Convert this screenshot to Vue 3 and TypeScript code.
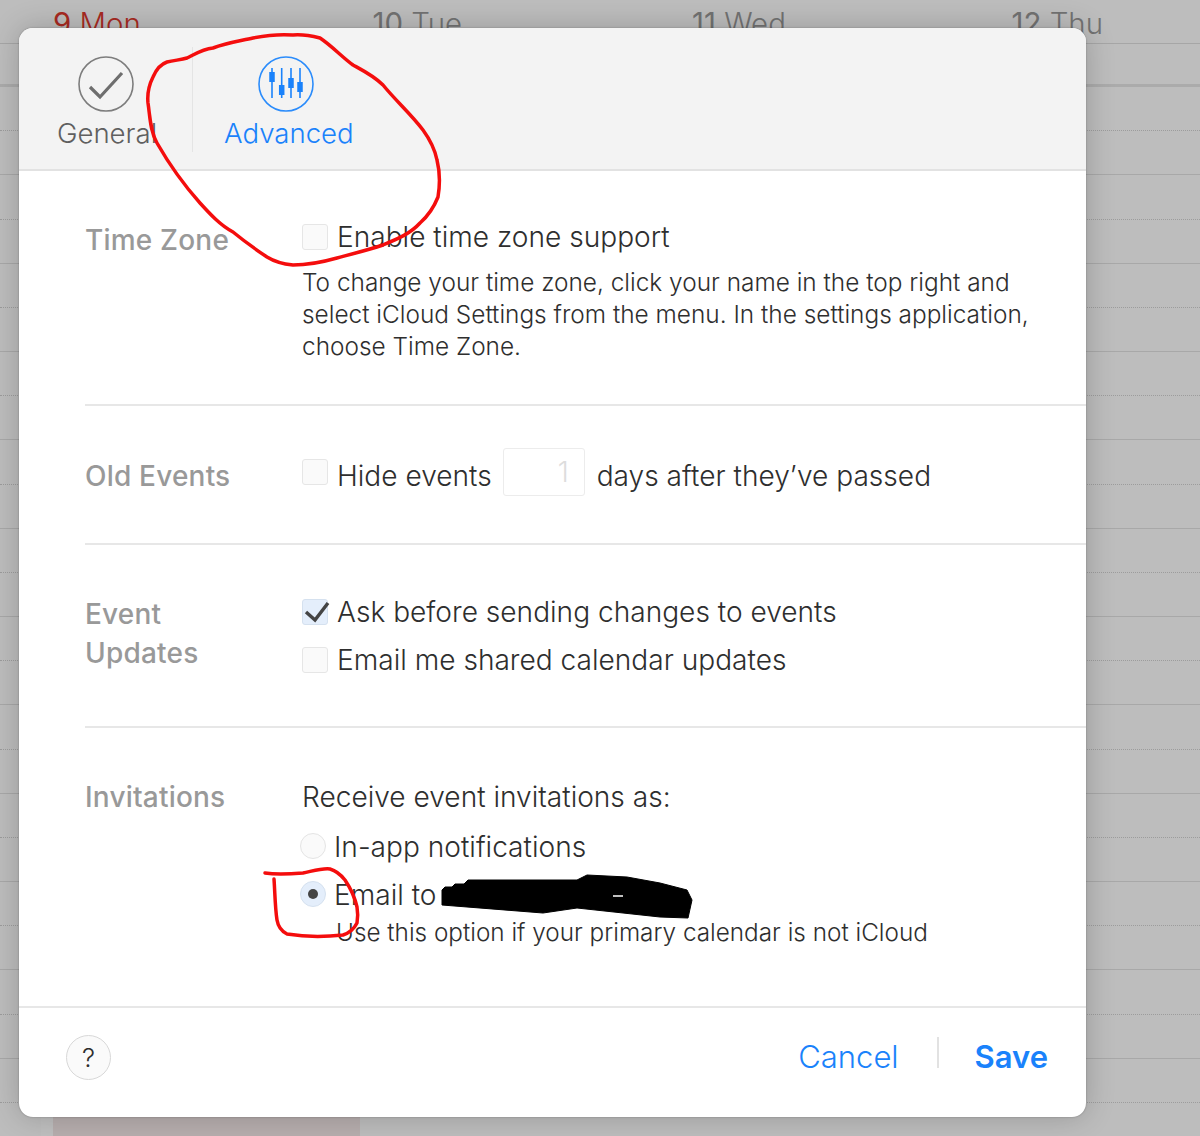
<script setup lang="ts">
interface Col { num: string; day: string; today?: boolean }
const cols: Col[] = [
  { num: '9', day: 'Mon', today: true },
  { num: '10', day: 'Tue' },
  { num: '11', day: 'Wed' },
  { num: '12', day: 'Thu' },
]
const rows = Array.from({ length: 23 }, (_, i) => i)
</script>

<template>
  <div class="page">
    <div class="calendar">
      <div class="days">
        <div v-for="c in cols" :key="c.num" class="day" :class="{ today: c.today }">
          <span class="num">{{ c.num }}</span> <span class="name">{{ c.day }}</span>
        </div>
      </div>
      <div class="allday"></div>
      <div v-for="r in rows" :key="r" class="slot" :class="r % 2 === 0 ? 'dotted' : 'solid'"></div>
      <div class="strip"></div>
      <div class="event"></div>
    </div>

    <div class="modal">
      <header class="tabs">
        <div class="tab general">
          <svg width="56" height="56" viewBox="0 0 56 56" fill="none">
            <circle cx="28" cy="28" r="27" stroke="#7d7d7d" stroke-width="1.6" />
            <path d="M12 31 L22 41 L44 17" stroke="#6e6e6e" stroke-width="3.2" />
          </svg>
          <span>General</span>
        </div>
        <div class="tab-sep"></div>
        <div class="tab advanced">
          <svg width="56" height="56" viewBox="0 0 56 56" fill="none">
            <circle cx="28" cy="28" r="27" stroke="#2b8cfb" stroke-width="1.6" />
            <path d="M14 12V42M23.700 12V42M33 12V42M42 12V42" stroke="#1a82fb" stroke-width="1.600" />
            <g fill="#1a82fb">
              <rect x="11.250" y="16" width="5.500" height="10" />
              <rect x="20.950" y="29" width="5.500" height="10" />
              <rect x="30.250" y="22" width="5.500" height="10" />
              <rect x="39.250" y="26" width="5.500" height="10" />
            </g>
          </svg>
          <span>Advanced</span>
        </div>
      </header>

      <section class="row r1">
        <div class="label">Time Zone</div>
        <div class="content">
          <div class="line"><i class="box"></i><span>Enable time zone support</span></div>
          <p class="note">To change your time zone, click your name in the top right and select iCloud Settings from the menu. In the settings application, choose Time Zone.</p>
        </div>
      </section>

      <section class="row r2">
        <div class="label">Old Events</div>
        <div class="content">
          <div class="line hide">
            <i class="box"></i><span>Hide events</span>
            <span class="num-input">1</span>
            <span>days after they’ve passed</span>
          </div>
        </div>
      </section>

      <section class="row r3">
        <div class="label">Event<br />Updates</div>
        <div class="content stack">
          <div class="line">
            <i class="box checked">
              <svg width="26" height="26" viewBox="0 0 26 26" fill="none">
                <path d="M4 13 L13 21 L26 4" stroke="#444" stroke-width="3.400" />
              </svg>
            </i>
            <span>Ask before sending changes to events</span>
          </div>
          <div class="line"><i class="box"></i><span>Email me shared calendar updates</span></div>
        </div>
      </section>

      <section class="row r4">
        <div class="label">Invitations</div>
        <div class="content">
          <div class="receive">Receive event invitations as:</div>
          <div class="line radio-line first-radio"><i class="radio"></i><span>In-app notifications</span></div>
          <div class="line radio-line"><i class="radio on"></i><span>Email to</span></div>
          <div class="hint">Use this option if your primary calendar is not iCloud</div>
        </div>
      </section>

      <footer class="foot">
        <button class="help" type="button">?</button>
        <div class="actions">
          <span class="cancel">Cancel</span>
          <i class="act-sep"></i>
          <span class="save">Save</span>
        </div>
      </footer>
    </div>

    <svg class="marks" width="1200" height="1136" viewBox="0 0 1200 1136" fill="none">
      <path d="M442 890 L445 887 L452 887 L455 884 L464 884 L468 880 L577 880 L587 875 L627 877 L660 883 L687 890 L692 900 L688 918 L660 917 L577 908 L543 913 L442 905 Z" fill="#000" stroke="#000" stroke-linejoin="round" />
      <path d="M613 896 L623 896" stroke="#fff" stroke-width="1.500" />
      <path d="M167 62 C175 60 181 60 187 58 C197 53 203 49 213 48 C226 43 240 41 253 38 C268 35 281 34 293 35 C304 34 312 36 320 38 C332 46 342 57 353 65 C364 71 374 76 383 85 C396 101 411 114 423 130 C431 141 435 150 437 160 C440 172 440 185 438 197 C434 207 428 216 420 223 C410 234 397 239 383 245 C368 250 352 254 337 258 C323 262 308 265 293 265 C283 264 275 262 267 257 C255 249 244 241 233 232 C220 225 210 214 200 203 C184 185 169 164 157 143 C150 131 150 116 148 103 C147 93 149 85 153 77 C156 70 161 64 167 62 Z" stroke="#f40d0d" stroke-width="3.500" stroke-linejoin="round" />
      <path d="M265 873 C277 875 291 874 303 873 C313 871 322 868 330 869 C337 871 341 875 345 880 C351 889 355 898 357 907 C358 913 358 918 357 923 C354 929 349 933 343 935 C325 937 305 937 287 934 C281 931 278 926 277 920 C275 907 275 893 274 879" stroke="#f40d0d" stroke-width="3.500" stroke-linejoin="round" stroke-linecap="round" />
    </svg>
  </div>
</template>

<style>
html, body { margin: 0; padding: 0; }
</style>

<style scoped>
.page {
  position: relative;
  width: 1200px;
  height: 1136px;
  overflow: hidden;
  background: #bdbdbd;
  font-family: Inter, "Liberation Sans", sans-serif;
  color: #2e2e2e;
}
.calendar { position: absolute; inset: 0; }
.days { display: flex; height: 43px; padding-left: 53px; border-bottom: 1px solid #a6a6a6; box-sizing: content-box; }
.day { flex: none; width: 319.500px; padding-top: 7px; font-size: 29.400px; line-height: 34px; color: #727272; white-space: nowrap; box-sizing: border-box; }
.day .name { font-weight: 300; }
.day.today { color: #a72a22; }
.allday { height: 40px; border-bottom: 3px solid #ababab; }
.slot { height: 44.180px; box-sizing: border-box; }
.slot.dotted { border-bottom: 1px dotted #9c9c9c; }
.slot.solid { border-bottom: 1px solid #a8a8a8; }
.strip { position: absolute; left: 41px; top: 1110px; width: 12px; height: 26px; background: #bfbfbf; }
.event { position: absolute; left: 53px; top: 1110px; width: 307px; height: 26px; background: #b7aeae; }

.modal {
  position: absolute;
  left: 19px;
  top: 28px;
  width: 1067px;
  height: 1089px;
  border-radius: 14px;
  background: #fff;
  overflow: hidden;
  box-shadow: 0 0 30px rgba(0, 0, 0, 0.2), 0 0 2px rgba(0, 0, 0, 0.3);
  display: flex;
  flex-direction: column;
}
.tabs {
  height: 143px;
  flex: none;
  box-sizing: border-box;
  background: #f3f3f3;
  border-bottom: 2px solid #e2e2e2;
  display: flex;
  align-items: flex-start;
  padding: 28px 0 0 38px;
}
.tab { display: flex; flex-direction: column; align-items: center; font-size: 27.600px; line-height: 34px; font-weight: 300; }
.tab span { margin-top: 4px; }
.general svg { margin-left: -3px; }
.advanced svg { margin-left: -5px; }
.general { color: #5f5f5f; width: 100px; }
.advanced { color: #1a82fb; margin-left: 31px; }
.tab-sep { width: 1px; height: 105px; margin: -9px 0 0 35px; background: #e4e4e4; }

.row { display: flex; flex: none; box-sizing: border-box; margin-left: 66px; border-bottom: 2px solid #e7e7e7; font-size: 28.100px; line-height: 34px; }
.r1 { height: 235px; padding-top: 49px; }
.r2 { height: 139px; padding-top: 53px; }
.r3 { height: 183px; padding-top: 50px; }
.r4 { height: 278px; padding-top: 52px; border-bottom-width: 0; }
.label { width: 217px; flex: none; font-weight: 500; color: #999; line-height: 39px; font-size: 28px; letter-spacing: 0.2px; }
.r1 .label { margin-top: 1px; }
.r2 .label { margin-top: -2px; }
.r4 .label { margin-top: -2px; }
.content { flex: 1; min-width: 0; padding-right: 40px; }
.line { display: flex; align-items: center; gap: 9px; white-space: nowrap; font-weight: 300; height: 34px; }
.box { width: 26px; height: 26px; flex: none; box-sizing: border-box; border: 1px solid #e6e6e6; border-radius: 3px; background: #fafafa; display: flex; align-items: center; justify-content: center; }
.box svg { overflow: visible; flex: none; }
.box.checked { background: #e4eefb; border-color: #d5e1ef; }
.note { margin: 12px 0 0; font-weight: 300; font-size: 24.400px; line-height: 32px; }
.hide { height: 48px; margin-top: -7px; gap: 9px; }
.hide .box { margin-bottom: 8px; margin-right: 1px; }
.hide .box { margin-right: 0; }
.num-input { width: 82px; height: 48px; margin: 0 3px 8px 2px; box-sizing: border-box; border: 1px solid #ececec; border-radius: 3px; text-align: right; padding: 6px 15px 0 0; color: #ddd; background: #fff; }
.stack { display: flex; flex-direction: column; gap: 14px; }
.receive { font-weight: 300; }
.radio-line { gap: 8px; }
.first-radio { margin-top: 16px; margin-bottom: 14px; }
.radio { width: 26px; height: 26px; flex: none; box-sizing: border-box; margin: 0 0 3px -2px; border-radius: 50%; border: 1px solid #e4e4e4; background: #fafafa; position: relative; }
.radio.on { background: #e4eefb; border-color: #d5e1ef; }
.radio.on::after { content: ""; position: absolute; left: 7px; top: 7px; width: 10px; height: 10px; border-radius: 50%; background: #444; }
.hint { font-weight: 300; font-size: 24.300px; line-height: 30px; margin: 5px 0 0 34px; white-space: nowrap; }

.foot { flex: none; height: 111px; border-top: 2px solid #e7e7e7; box-sizing: border-box; display: flex; align-items: flex-start; justify-content: space-between; padding: 27px 38px 0 47px; }
.help { width: 45px; height: 45px; border-radius: 50%; border: 1px solid #d8d8d8; background: #fafafa; font: 300 26px/1 Inter, sans-serif; color: #2e2e2e; padding: 0; }
.actions { display: flex; align-items: flex-start; font-size: 31px; line-height: 44px; color: #1a82fb; }
.cancel { font-weight: 300; }
.act-sep { width: 2px; height: 31px; background: #e2e2e2; margin: 2px 36px 0 38px; }
.save { font-weight: 600; }
.marks { position: absolute; left: 0; top: 0; pointer-events: none; }
</style>
